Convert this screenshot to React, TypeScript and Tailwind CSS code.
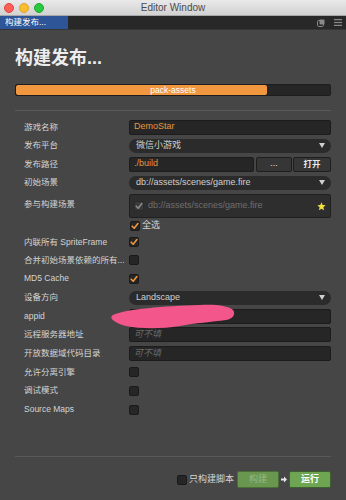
import React from 'react';

const font = { fontFamily: '"Liberation Sans", "Noto Sans CJK SC", sans-serif' };

function Check({ checked, disabled }: { checked?: boolean; disabled?: boolean }) {
  return (
    <div
      className={
        'w-[10px] h-[10px] rounded-[2px] border flex items-center justify-center shrink-0 ' +
        (disabled ? 'bg-[#3a3a3a] border-[#2a2a2a]' : 'bg-[#262626] border-[#1a1a1a]')
      }
    >
      {checked && (
        <svg width="8" height="8" viewBox="0 0 8 8">
          <path
            d="M1.2 4.2 L3.2 6.2 L6.9 1.6"
            fill="none"
            stroke={disabled ? '#8a8a8a' : '#f0973f'}
            strokeWidth="1.6"
            strokeLinecap="round"
            strokeLinejoin="round"
          />
        </svg>
      )}
    </div>
  );
}

function Row({ label, h, children }: { label: string; h: string; children: React.ReactNode }) {
  return (
    <div className={'flex items-center ' + h}>
      <div className="w-[105px] text-[8.5px] text-[#d4d4d4] whitespace-nowrap overflow-hidden">{label}</div>
      <div className="flex-1 flex items-center">{children}</div>
    </div>
  );
}

function Input({ value, placeholder }: { value?: string; placeholder?: string }) {
  return (
    <div className="flex-1 h-[15px] bg-[#262626] border border-[#1c1c1c] rounded-[2px] flex items-center pl-[4px] text-[9px]">
      {value ? (
        <span className="text-[#e8953f]">{value}</span>
      ) : (
        <span className="text-[#6a6a6a] italic">{placeholder}</span>
      )}
    </div>
  );
}

function Select({ value }: { value: string }) {
  return (
    <div className="flex-1 h-[14px] bg-[#2b2b2b] rounded-full flex items-center justify-between pl-[7px] pr-[6px] text-[9px] text-[#d0d0d0]">
      <span>{value}</span>
      <svg width="6" height="5" viewBox="0 0 6 5">
        <path d="M0 0 L6 0 L3 5 Z" fill="#d0d0d0" />
      </svg>
    </div>
  );
}

export default function App() {
  return (
    <div className="relative w-[346px] h-[500px] bg-[#464646] overflow-hidden" style={font}>
      {/* title bar */}
      <div className="h-[16px] bg-gradient-to-b from-[#e9e9e9] to-[#d2d2d2] border-b border-[#a8a8a8] flex items-center relative">
        <div className="flex items-center gap-[5px] pl-[4px]">
          <div className="w-[10px] h-[10px] rounded-full bg-[#fc5f57] border border-[#e0443e]" />
          <div className="w-[10px] h-[10px] rounded-full bg-[#fdbc2e] border border-[#dea123]" />
          <div className="w-[10px] h-[10px] rounded-full bg-[#28c840] border border-[#1aab29]" />
        </div>
        <div className="absolute inset-0 flex items-center justify-center text-[10px] text-[#4a4a4a]">
          Editor Window
        </div>
      </div>

      {/* tab bar */}
      <div className="h-[14px] bg-[#282828] flex items-center justify-between border-b border-[#363636]">
        <div className="h-full w-[68px] bg-[#2d5597] text-white text-[8.5px] flex items-center pl-[5px]">
          构建发布...
        </div>
        <div className="flex items-center gap-[9px] pr-[4px]">
          <svg width="8" height="8" viewBox="0 0 8 8">
            <rect x="0.5" y="1.5" width="6" height="6" rx="1.2" fill="none" stroke="#8a8a8a" strokeWidth="1" />
            <rect x="2.5" y="0.5" width="5" height="5" rx="1" fill="#8a8a8a" />
          </svg>
          <svg width="8" height="7" viewBox="0 0 8 7">
            <rect x="0" y="0" width="8" height="1.2" fill="#8a8a8a" />
            <rect x="0" y="2.9" width="8" height="1.2" fill="#8a8a8a" />
            <rect x="0" y="5.8" width="8" height="1.2" fill="#8a8a8a" />
          </svg>
        </div>
      </div>

      <div className="px-[15px]">
        <div className="mt-[18px] h-[20px] leading-[20px] text-[18px] font-bold text-[#ededed]">构建发布...</div>

        {/* progress */}
        <div className="mt-[16px] h-[12px] bg-[#262626] border border-[#1d1d1d] rounded-[2px] relative overflow-hidden">
          <div className="h-full w-[251px] bg-[#f0973f] rounded-[2px]" />
          <div className="absolute inset-0 flex items-center justify-center text-[8.5px] text-white">pack-assets</div>
        </div>

        <div className="mt-[14px] h-px bg-[#5a5a5a]" />

        <div className="pl-[9px] pt-[7px]">
          <Row label="游戏名称" h="h-[18px]">
            <Input value="DemoStar" />
          </Row>
          <Row label="发布平台" h="h-[19px]">
            <Select value="微信小游戏" />
          </Row>
          <Row label="发布路径" h="h-[18px]">
            <Input value="./build" />
            <div className="ml-[2px] w-[36px] h-[15px] bg-[#363636] border border-[#1e1e1e] rounded-[2px] flex items-center justify-center text-[9px] text-[#e0e0e0]">
              ...
            </div>
            <div className="ml-[1px] w-[38px] h-[15px] bg-[#363636] border border-[#1e1e1e] rounded-[2px] flex items-center justify-center text-[8.5px] text-[#e8e8e8] font-bold">
              打开
            </div>
          </Row>
          <Row label="初始场景" h="h-[19px]">
            <Select value="db://assets/scenes/game.fire" />
          </Row>

          <div className="flex items-start h-[26px]">
            <div className="w-[105px] text-[8.5px] text-[#d4d4d4] pt-[6px]">参与构建场景</div>
            <div className="flex-1 mt-[2px] h-[24px] bg-[#2e2e2e] border border-[#1f1f1f] rounded-[2px] flex items-center pl-[4px] pr-[4px]">
              <Check checked disabled />
              <span className="ml-[4px] text-[9px] text-[#6e6e6e] flex-1">db://assets/scenes/game.fire</span>
              <svg width="9" height="9" viewBox="0 0 10 10">
                <path
                  d="M5 0.4 L6.3 3.4 L9.6 3.7 L7.1 5.9 L7.9 9.2 L5 7.5 L2.1 9.2 L2.9 5.9 L0.4 3.7 L3.7 3.4 Z"
                  fill="#f3e03b"
                />
              </svg>
            </div>
          </div>
          <div className="flex items-center h-[15px]">
            <div className="w-[105px]" />
            <div className="ml-[1px]">
              <Check checked />
            </div>
            <span className="ml-[2px] text-[9px] text-[#d4d4d4]">全选</span>
          </div>

          <Row label="内联所有 SpriteFrame" h="h-[18px]">
            <Check checked />
          </Row>
          <Row label="合并初始场景依赖的所有..." h="h-[18px]">
            <Check />
          </Row>
          <Row label="MD5 Cache" h="h-[19px]">
            <Check checked />
          </Row>
          <Row label="设备方向" h="h-[19px]">
            <Select value="Landscape" />
          </Row>
          <Row label="appid" h="h-[18px]">
            <Input placeholder="" />
          </Row>
          <Row label="远程服务器地址" h="h-[19px]">
            <Input placeholder="可不填" />
          </Row>
          <Row label="开放数据域代码目录" h="h-[19px]">
            <Input placeholder="可不填" />
          </Row>
          <Row label="允许分离引擎" h="h-[18px]">
            <Check />
          </Row>
          <Row label="调试模式" h="h-[19px]">
            <Check />
          </Row>
          <Row label="Source Maps" h="h-[19px]">
            <Check />
          </Row>
        </div>

        <div className="mt-[37px] h-px bg-[#585858]" />

        <div className="mt-[14px] flex items-center justify-end h-[17px]">
          <Check />
          <span className="ml-[2px] text-[9px] text-[#d4d4d4]">只构建脚本</span>
          <div className="ml-[3px] w-[42px] h-[17px] bg-[#6a9750] border border-[#4a6e37] rounded-[2px] flex items-center justify-center text-[9px] text-[#94b884]">
            构建
          </div>
          <svg className="mx-[2px]" width="6" height="7" viewBox="0 0 6 7">
            <path d="M0 2.5 H3 V0.5 L6 3.5 L3 6.5 V4.5 H0 Z" fill="#e6e6e6" />
          </svg>
          <div className="w-[42px] h-[17px] bg-[#6ea552] border border-[#3f5f2e] rounded-[2px] flex items-center justify-center text-[9px] text-white font-bold">
            运行
          </div>
        </div>
      </div>

      {/* pink scribble over appid */}
      <svg className="absolute left-0 top-0 pointer-events-none" width="346" height="500" viewBox="0 0 346 500">
        <path
          d="M113 315 C125 309 165 306 200 305 C216 304 229 306 233 310 C236 314 233 319 226 320 C212 322 195 323 180 326 C162 329 140 329 126 326 C115 323 108 318 113 315 Z"
          fill="#f2568a"
        />
      </svg>
    </div>
  );
}
